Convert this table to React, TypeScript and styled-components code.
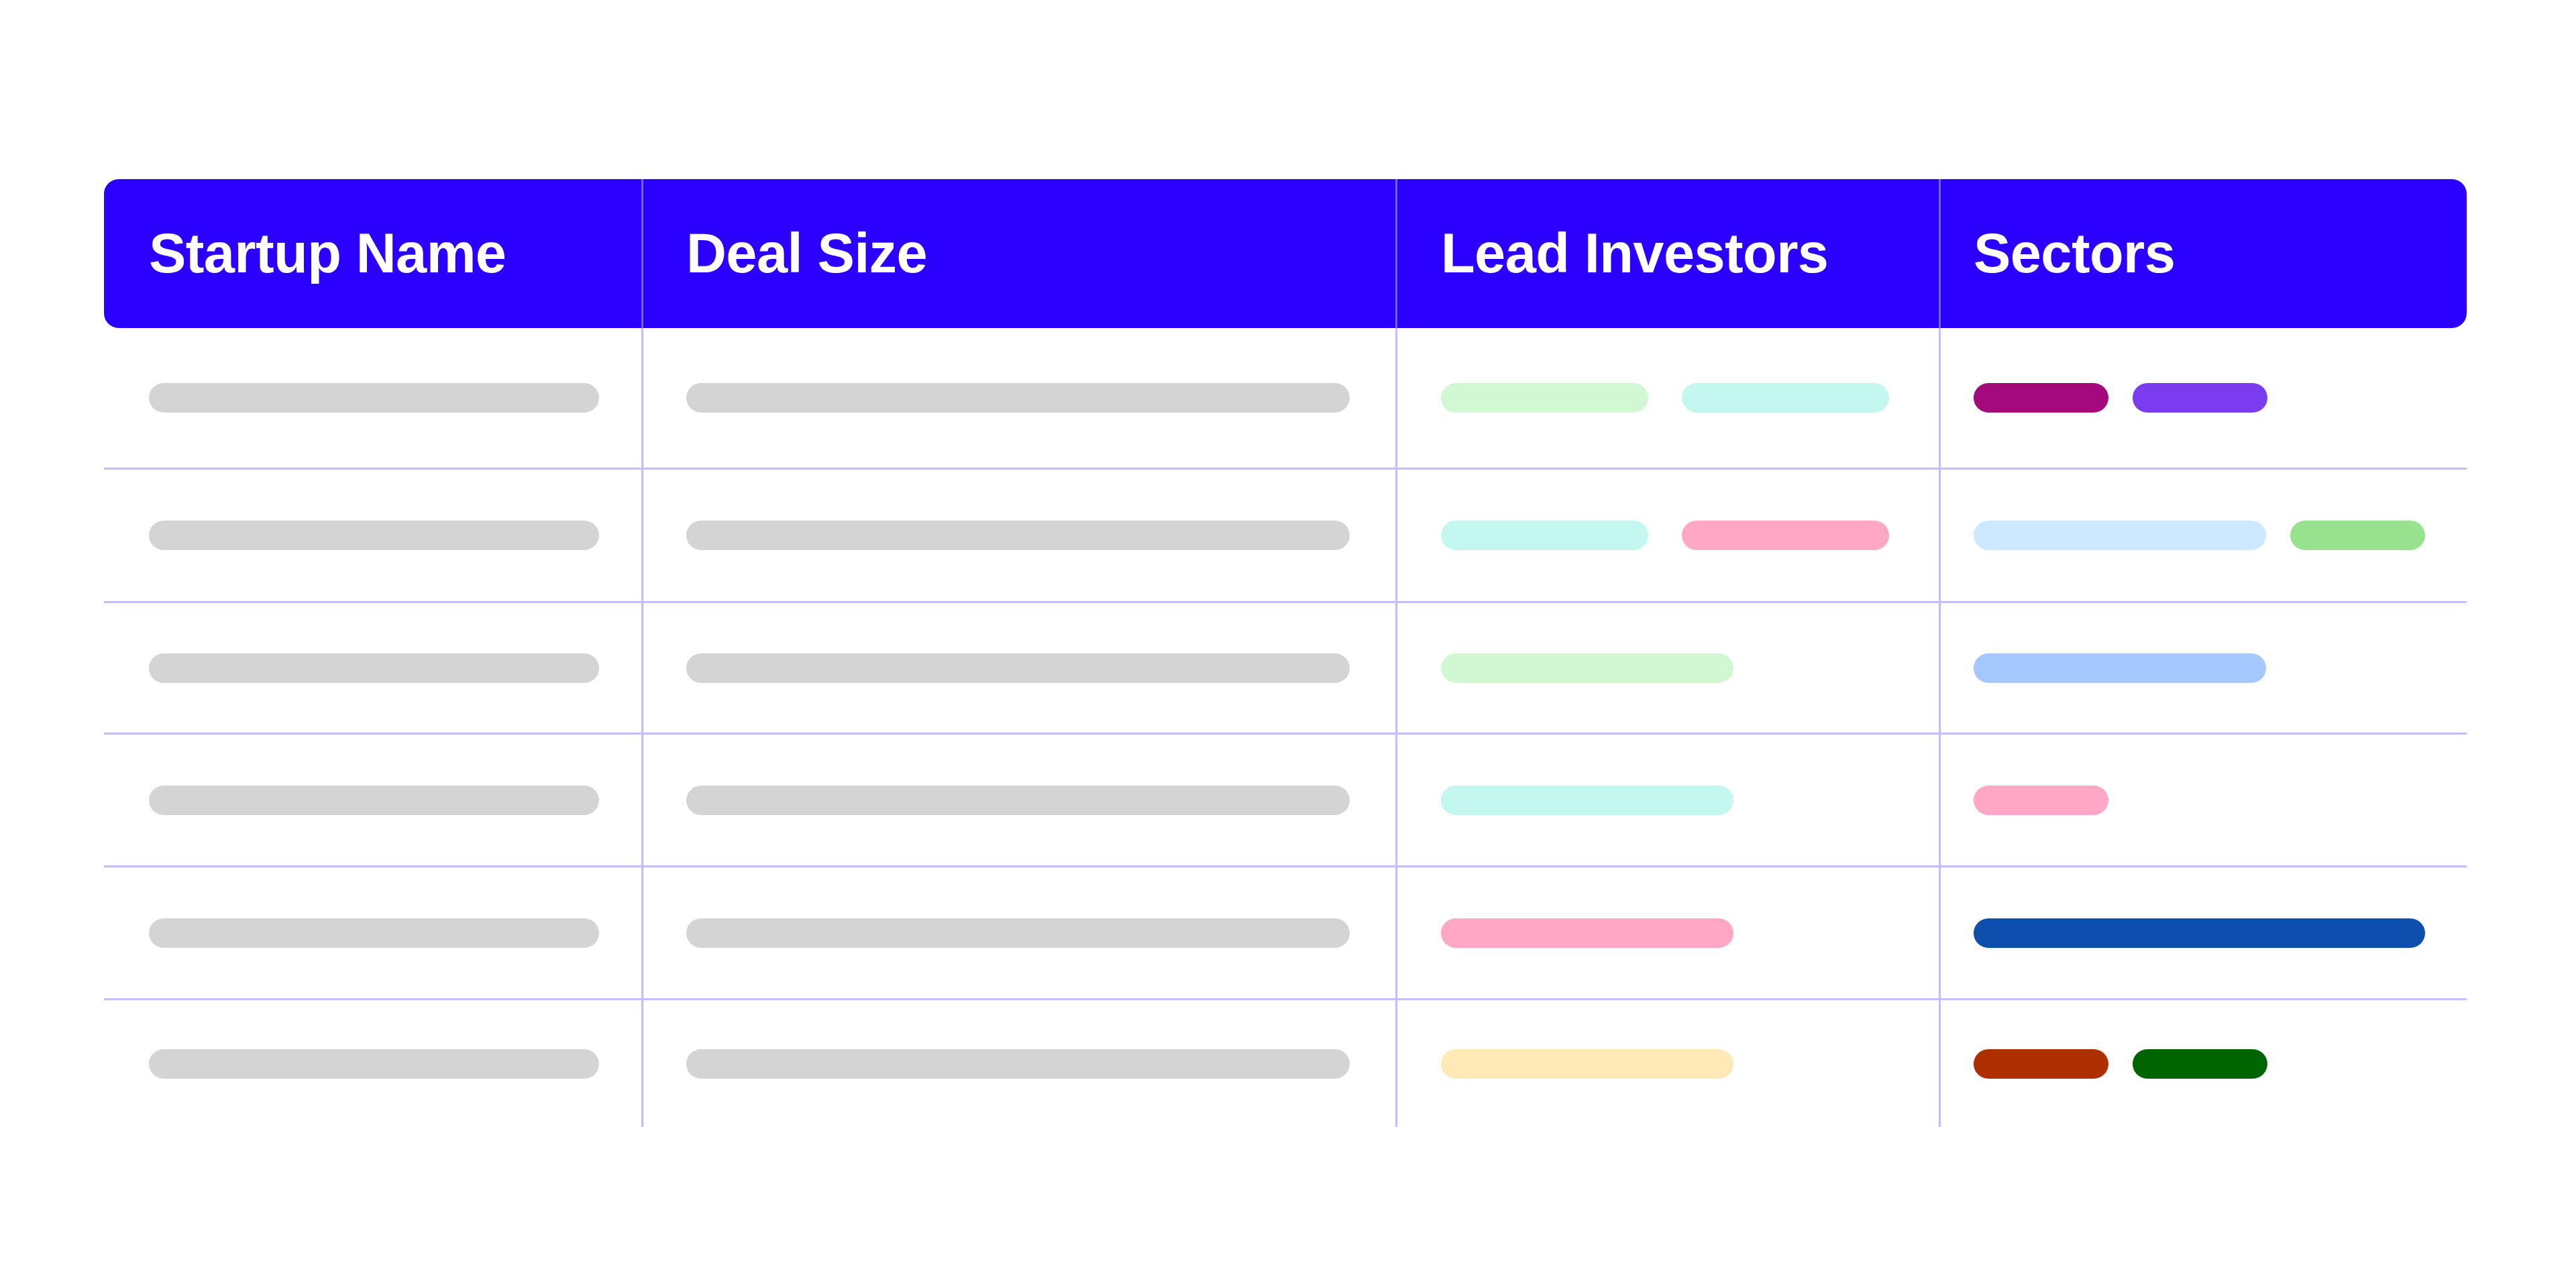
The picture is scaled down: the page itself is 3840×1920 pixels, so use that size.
import React from "react";
import styled, { createGlobalStyle } from "styled-components";

const GlobalStyle = createGlobalStyle`
  html, body {
    margin: 0;
    padding: 0;
    background: #ffffff;
  }
  * { box-sizing: border-box; }
`;

const COLS = "801px 1124px 810px 787px";

const Page = styled.div`
  width: 3840px;
  height: 1920px;
  background: #ffffff;
  padding: 267px 0 0 155px;
  font-family: "Liberation Sans", Arial, sans-serif;
`;

const Table = styled.div`
  width: 3522px;
  display: flex;
  flex-direction: column;
`;

const HeaderRow = styled.div`
  display: grid;
  grid-template-columns: ${COLS};
  height: 222px;
  background: #2b00ff;
  border-radius: 22px;
  overflow: hidden;
`;

const HeaderCell = styled.div<{ $first?: boolean; $pad: number }>`
  display: flex;
  align-items: center;
  padding-left: ${(p) => p.$pad}px;
  border-left: ${(p) => (p.$first ? "none" : "3px solid #7060ff")};
  color: #ffffff;
  font-weight: 700;
  font-size: 83px;
  letter-spacing: -0.6px;
  white-space: nowrap;
`;

const BodyRow = styled.div<{ $height: number; $last?: boolean }>`
  display: grid;
  grid-template-columns: ${COLS};
  height: ${(p) => p.$height}px;
  border-bottom: ${(p) => (p.$last ? "none" : "3px solid #c6bdff")};
`;

const BodyCell = styled.div<{ $first?: boolean; $pad: number; $gap: number }>`
  display: flex;
  align-items: center;
  gap: ${(p) => p.$gap}px;
  padding-left: ${(p) => p.$pad}px;
  border-left: ${(p) => (p.$first ? "none" : "3px solid #c6bdff")};
`;

const Pill = styled.div<{ $w: number; $c: string }>`
  width: ${(p) => p.$w}px;
  height: 44px;
  border-radius: 22px;
  background: ${(p) => p.$c};
  flex: none;
`;

type Bar = { w: number; c: string };

const GRAY = "#d4d4d4";
const headers = ["Startup Name", "Deal Size", "Lead Investors", "Sectors"];
const pads = [67, 64, 65, 49];
const gaps = [0, 0, 50, 36];

const rows: { h: number; investors: Bar[]; sectors: Bar[] }[] = [
  {
    h: 211,
    investors: [
      { w: 309, c: "#d2f7d3" },
      { w: 309, c: "#c4f7f0" },
    ],
    sectors: [
      { w: 201, c: "#a50a7c" },
      { w: 201, c: "#7b3bee" },
    ],
  },
  {
    h: 199,
    investors: [
      { w: 309, c: "#c4f7f0" },
      { w: 309, c: "#ffa7c5" },
    ],
    sectors: [
      { w: 436, c: "#cce9ff" },
      { w: 201, c: "#98e28f" },
    ],
  },
  {
    h: 196,
    investors: [{ w: 436, c: "#d2f7d3" }],
    sectors: [{ w: 436, c: "#a4c8ff" }],
  },
  {
    h: 198,
    investors: [{ w: 436, c: "#c4f7f0" }],
    sectors: [{ w: 201, c: "#ffa7c5" }],
  },
  {
    h: 198,
    investors: [{ w: 436, c: "#ffa7c5" }],
    sectors: [{ w: 673, c: "#0e4fae" }],
  },
  {
    h: 189,
    investors: [{ w: 436, c: "#ffe9b6" }],
    sectors: [
      { w: 201, c: "#ae2f02" },
      { w: 201, c: "#006400" },
    ],
  },
];

export default function App() {
  return (
    <>
      <GlobalStyle />
      <Page>
        <Table>
          <HeaderRow>
            {headers.map((h, i) => (
              <HeaderCell key={h} $first={i === 0} $pad={pads[i]}>
                {h}
              </HeaderCell>
            ))}
          </HeaderRow>
          {rows.map((r, ri) => (
            <BodyRow key={ri} $height={r.h} $last={ri === rows.length - 1}>
              <BodyCell $first $pad={pads[0]} $gap={gaps[0]}>
                <Pill $w={671} $c={GRAY} />
              </BodyCell>
              <BodyCell $pad={pads[1]} $gap={gaps[1]}>
                <Pill $w={989} $c={GRAY} />
              </BodyCell>
              <BodyCell $pad={pads[2]} $gap={gaps[2]}>
                {r.investors.map((b, bi) => (
                  <Pill key={bi} $w={b.w} $c={b.c} />
                ))}
              </BodyCell>
              <BodyCell $pad={pads[3]} $gap={gaps[3]}>
                {r.sectors.map((b, bi) => (
                  <Pill key={bi} $w={b.w} $c={b.c} />
                ))}
              </BodyCell>
            </BodyRow>
          ))}
        </Table>
      </Page>
    </>
  );
}
